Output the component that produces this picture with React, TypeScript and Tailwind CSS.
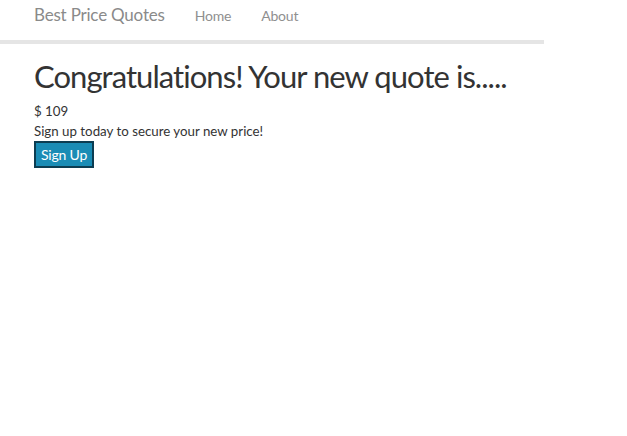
import React from "react";

const font = { fontFamily: '"Lato", "Liberation Sans", sans-serif' };

export default function App() {
  return (
    <div className="min-h-[436px] w-[627px] bg-white" style={font}>
      <nav className="flex h-[44px] w-[544px] items-start border-b-4 border-[#e5e5e5] px-[34px] pt-[4px]">
        <span className="text-[17px] leading-[22px] tracking-[-0.2px] text-[#8a8a8a]">Best Price Quotes</span>
        <a className="ml-[30px] mt-[2px] text-[14px] leading-[20px] tracking-[-0.2px] text-[#8f8f8f]">Home</a>
        <a className="ml-[30px] mt-[2px] text-[14px] leading-[20px] tracking-[-0.2px] text-[#8f8f8f]">About</a>
      </nav>
      <main className="px-[34px] pt-[13px] text-[#333]">
        <h1 className="text-[31px] leading-[38px] tracking-[-0.95px]">
          Congratulations! Your new quote is.....
        </h1>
        <p className="mt-[6px] text-[13.3px] leading-[20px]">$ 109</p>
        <p className="text-[13.3px] leading-[20px]">Sign up today to secure your new price!</p>
        <button className="h-[27px] border-2 border-[#0c3d52] bg-[#1a8cb5] px-[5px] text-[14px] tracking-[-0.2px] text-white">
          Sign Up
        </button>
      </main>
    </div>
  );
}
